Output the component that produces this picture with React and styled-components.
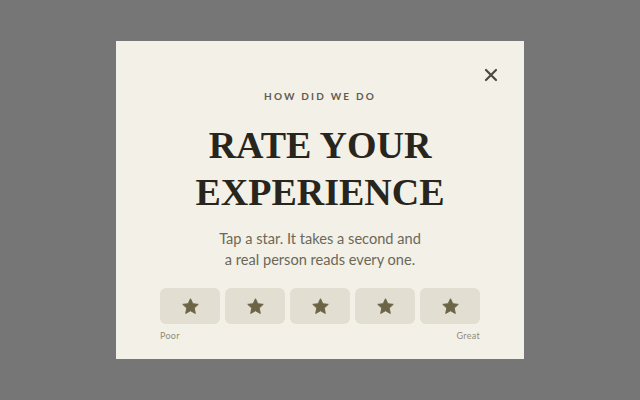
import React from 'react';
import styled, { createGlobalStyle } from 'styled-components';

const GlobalStyle = createGlobalStyle`
    html, body {
        margin: 0;
        padding: 0;
        height: 100%;
    }
    body {
        background-color: #767676;
        font-family: "Lato", "Noto Sans", sans-serif;
    }
    #root {
        height: 100%;
    }
`;

const StarIcon = () => (
    <svg width="19" height="19" viewBox="0 0 24 24" aria-hidden="true">
        <path
            d="M12 2.2l2.95 6.3 6.85.8-5.07 4.7 1.35 6.8L12 17.4l-6.08 3.4 1.35-6.8L2.2 9.3l6.85-.8z"
            fill="#6b6446"
            stroke="#6b6446"
            strokeWidth="1.2"
            strokeLinejoin="round"
        />
    </svg>
);

const CloseIcon = () => (
    <svg width="14" height="14" viewBox="0 0 14 14" aria-hidden="true">
        <path d="M2 2L12 12M12 2L2 12" stroke="#4a4a42" strokeWidth="2.2" strokeLinecap="round" />
    </svg>
);

const labels = ['1 star', '2 stars', '3 stars', '4 stars', '5 stars'];

const App = () => {

    return (
        <>
            <GlobalStyle />
            <OverlayStyled className='Overlay'>
                <DialogStyled role="dialog" aria-label="Rate your experience">
                    <CloseButton aria-label="Close"><CloseIcon /></CloseButton>
                    <Eyebrow>How did we do</Eyebrow>
                    <Title>Rate your<br />experience</Title>
                    <Lead>
                        Tap a star. It takes a second and<br />
                        a real person reads every one.
                    </Lead>
                    <StarRow>
                        {labels.map((l) => (
                            <StarButton key={l} aria-label={l}><StarIcon /></StarButton>
                        ))}
                    </StarRow>
                    <ScaleRow>
                        <span>Poor</span>
                        <span>Great</span>
                    </ScaleRow>
                </DialogStyled>
            </OverlayStyled>
        </>
    );
}

export default App;

const OverlayStyled = styled.div`
    height: 100%;
    display: flex;
    align-items: center;
    justify-content: center;
`;

const DialogStyled = styled.div`
    position: relative;
    box-sizing: border-box;
    width: 408px;
    height: 318px;
    background-color: #f3f0e7;
    padding: 49px 44px 0;
    display: flex;
    flex-direction: column;
    align-items: center;
`;

const CloseButton = styled.button`
    position: absolute;
    top: 26px;
    right: 25px;
    width: 16px;
    height: 16px;
    padding: 0;
    border: none;
    background: none;
    display: flex;
    align-items: center;
    justify-content: center;
    cursor: pointer;
`;

const Eyebrow = styled.div`
    font-size: 10px;
    font-weight: 700;
    letter-spacing: 2.2px;
    text-transform: uppercase;
    color: #5f5c4f;
    line-height: 12px;
`;

const Title = styled.h1`
    margin: 20px 0 0;
    font-family: "Liberation Serif", "DejaVu Serif", serif;
    font-size: 38px;
    font-weight: 700;
    line-height: 47px;
    text-transform: uppercase;
    text-align: center;
    color: #27251c;
`;

const Lead = styled.p`
    margin: 12px 0 0;
    font-size: 14.6px;
    line-height: 21px;
    text-align: center;
    color: #6b6858;
`;

const StarRow = styled.div`
    margin-top: 18px;
    width: 100%;
    display: grid;
    grid-template-columns: repeat(5, 1fr);
    gap: 5px;
`;

const StarButton = styled.button`
    height: 36px;
    border: none;
    border-radius: 6px;
    background-color: #e2ded1;
    display: flex;
    align-items: center;
    justify-content: center;
    padding: 0;
    cursor: pointer;
`;

const ScaleRow = styled.div`
    margin-top: 6px;
    width: 100%;
    display: flex;
    justify-content: space-between;
    font-size: 9px;
    letter-spacing: 0.3px;
    color: #8f8b7d;
`;
